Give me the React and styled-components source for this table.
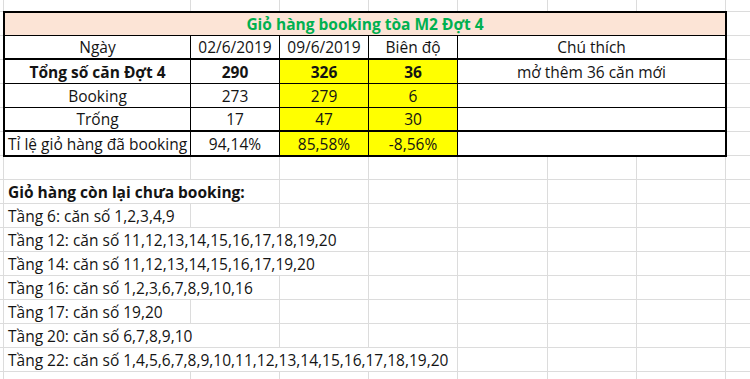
import React from "react";
import styled, { createGlobalStyle } from "styled-components";

const GRID = "#dcdcdc";
// last pixel of each sheet column, where Excel draws its gridline
const colLines = [3, 190, 279, 368, 457, 547, 636, 725];

const GlobalStyle = createGlobalStyle`
  html, body {
    margin: 0;
    padding: 0;
    background: #fff;
  }
  body {
    font-family: "Open Sans", "Noto Sans", sans-serif;
    color: #141414;
  }
`;

const Sheet = styled.div`
  display: grid;
  grid-template-columns: 4px 187px 89px 89px 89px 90px 89px 89px 1fr;
  grid-template-rows: 12px repeat(16, 24px);
  width: 750px;
  height: 379px;
  overflow: hidden;
  font-size: 15.5px;
  background-color: #fff;
  background-image: ${colLines.map(() => `linear-gradient(${GRID}, ${GRID})`).join(", ")},
    linear-gradient(to bottom, ${GRID} 1px, transparent 1px);
  background-size: ${colLines.map(() => "1px 100%").join(", ")}, 100% 24px;
  background-position: ${colLines.map((x) => `${x}px 0`).join(", ")}, 0 11px;
  background-repeat: ${colLines.map(() => "no-repeat").join(", ")}, repeat;
`;

const Table = styled.div`
  grid-column: 2 / 9;
  grid-row: 2 / 8;
  margin: -1px;
  border: 2px solid #000;
  background: #fff;
  display: grid;
  grid-template-rows: 23px repeat(4, 24px) 23px;
`;

const TitleBar = styled.div`
  display: flex;
  align-items: center;
  justify-content: center;
  background: #fce4d6;
  color: #00b050;
  font-weight: 700;
  border-bottom: 1px solid #000;
`;

const Row = styled.div`
  display: grid;
  grid-template-columns: 186px 89px 89px 89px 1fr;
  border-bottom: ${(p) => p.$rule || 0}px solid #000;
  font-weight: ${(p) => (p.$bold ? 700 : 400)};
`;

const Cell = styled.div`
  display: flex;
  align-items: center;
  justify-content: center;
  white-space: nowrap;
  border-right: 1px solid #000;
  background: ${(p) => (p.$mark ? "#ffff00" : "transparent")};
  font-weight: ${(p) => p.$weight || "inherit"};

  &:last-child {
    border-right: 0;
  }
`;

const Line = styled.div`
  grid-column: 2 / span ${(p) => p.$span};
  display: flex;
  align-items: center;
  padding: 1px 0 0 4px;
  white-space: nowrap;
  background: #fff;
  border-right: 1px solid ${GRID};
  border-bottom: 1px solid ${GRID};
  font-weight: ${(p) => (p.$bold ? 700 : 400)};
`;

const rows = [
  { rule: 2, cells: ["Ngày", "02/6/2019", "09/6/2019", "Biên độ", "Chú thích"], plain: true },
  { rule: 1, bold: true, cells: ["Tổng số căn Đợt 4", "290", "326", "36", "mở thêm 36 căn mới"] },
  { rule: 1, cells: ["Booking", "273", "279", "6", ""] },
  { rule: 2, cells: ["Trống", "17", "47", "30", ""] },
  { rule: 0, cells: ["Tỉ lệ giỏ hàng đã booking", "94,14%", "85,58%", "-8,56%", ""] },
];

const remaining = [
  { text: "Giỏ hàng còn lại chưa booking:", span: 2, bold: true },
  { text: "Tầng 6: căn số 1,2,3,4,9", span: 1 },
  { text: "Tầng 12: căn số 11,12,13,14,15,16,17,18,19,20", span: 3 },
  { text: "Tầng 14: căn số 11,12,13,14,15,16,17,19,20", span: 3 },
  { text: "Tầng 16: căn số 1,2,3,6,7,8,9,10,16", span: 2 },
  { text: "Tầng 17: căn số 19,20", span: 1 },
  { text: "Tầng 20: căn số 6,7,8,9,10", span: 2 },
  { text: "Tầng 22: căn số 1,4,5,6,7,8,9,10,11,12,13,14,15,16,17,18,19,20", span: 4 },
];

export default function App() {
  return (
    <>
      <GlobalStyle />
      <Sheet>
        <Table>
          <TitleBar>Giỏ hàng booking tòa M2 Đợt 4</TitleBar>
          {rows.map((r, i) => (
            <Row key={i} $rule={r.rule} $bold={r.bold}>
              {r.cells.map((c, j) => (
                <Cell
                  key={j}
                  $mark={!r.plain && (j === 2 || j === 3)}
                  $weight={j === 4 ? 400 : undefined}
                >
                  {c}
                </Cell>
              ))}
            </Row>
          ))}
        </Table>
        {remaining.map((l, i) => (
          <Line key={i} $span={l.span} $bold={l.bold} style={{ gridRow: 9 + i }}>
            {l.text}
          </Line>
        ))}
      </Sheet>
    </>
  );
}
